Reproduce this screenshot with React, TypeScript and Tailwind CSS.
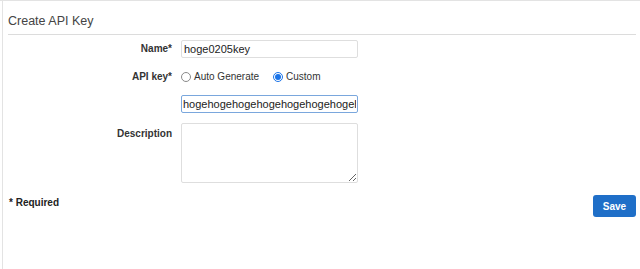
import { useState } from 'react'

function Label({ children, top }: { children: React.ReactNode; top?: boolean }) {
  return (
    <div className={`w-[164px] shrink-0 text-right text-[10px] font-bold leading-[12px] text-[#333] ${top ? 'pt-[5px]' : ''}`}>
      {children}
    </div>
  )
}

function Radio({ checked, label, onClick }: { checked: boolean; label: string; onClick: () => void }) {
  return (
    <label className="flex items-center gap-[3px] cursor-pointer" onClick={onClick}>
      <span
        className={`flex h-[10px] w-[10px] items-center justify-center rounded-full border ${
          checked ? 'border-[#1b74e8] bg-white' : 'border-[#8a8a8a] bg-white'
        }`}
      >
        {checked && <span className="h-[6px] w-[6px] rounded-full bg-[#1b74e8]" />}
      </span>
      <span className="text-[10px] leading-[12px] text-[#333]">{label}</span>
    </label>
  )
}

export default function App() {
  const [mode, setMode] = useState<'auto' | 'custom'>('custom')

  return (
    <div className="h-[269px] w-[640px] overflow-hidden border-t border-[#e3e3e3] bg-white font-['Liberation_Sans',Arial,sans-serif]">
      <div className="ml-[2px] flex h-full flex-col border-l border-[#e3e3e3] pl-[5px] pr-[4px]">
        {/* Header */}
        <h2 className="pt-[12px] pb-[5px] text-[12.5px] leading-[16px] text-[#444]">Create API Key</h2>
        <div className="h-px bg-[#dcdcdc]" />

        {/* Form */}
        <div className="mt-[5px] flex flex-col">
          <div className="flex items-center gap-[9px]">
            <Label>Name*</Label>
            <input
              defaultValue="hoge0205key"
              className="h-[18px] w-[177px] rounded-[2px] border border-[#dedede] px-[2px] text-[11px] text-[#222] outline-none"
            />
          </div>

          <div className="mt-[11px] flex h-[16px] items-center gap-[9px]">
            <Label>API key*</Label>
            <div className="flex items-center gap-[14px]">
              <Radio checked={mode === 'auto'} label="Auto Generate" onClick={() => setMode('auto')} />
              <Radio checked={mode === 'custom'} label="Custom" onClick={() => setMode('custom')} />
            </div>
          </div>

          <div className="mt-[10px] flex items-center gap-[9px]">
            <div className="w-[164px] shrink-0" />
            <input
              defaultValue="hogehogehogehogehogehogehogehogehoge"
              className="h-[18px] w-[177px] rounded-[2px] border border-[#7aa7dd] px-[1px] text-[11px] text-[#222] outline-none"
            />
          </div>

          <div className="mt-[10px] flex items-start gap-[9px]">
            <Label top>Description</Label>
            <textarea className="h-[60px] w-[177px] resize rounded-[2px] border border-[#dedede] outline-none" />
          </div>
        </div>

        {/* Footer */}
        <div className="mt-[12px] flex items-start justify-between">
          <span className="pt-[2px] pl-[1px] text-[10px] font-bold leading-[12px] text-[#222]">* Required</span>
          <button className="h-[22px] w-[43px] rounded-[3px] bg-[#1f6fc8] text-[10px] font-bold text-white">
            Save
          </button>
        </div>
      </div>
    </div>
  )
}
